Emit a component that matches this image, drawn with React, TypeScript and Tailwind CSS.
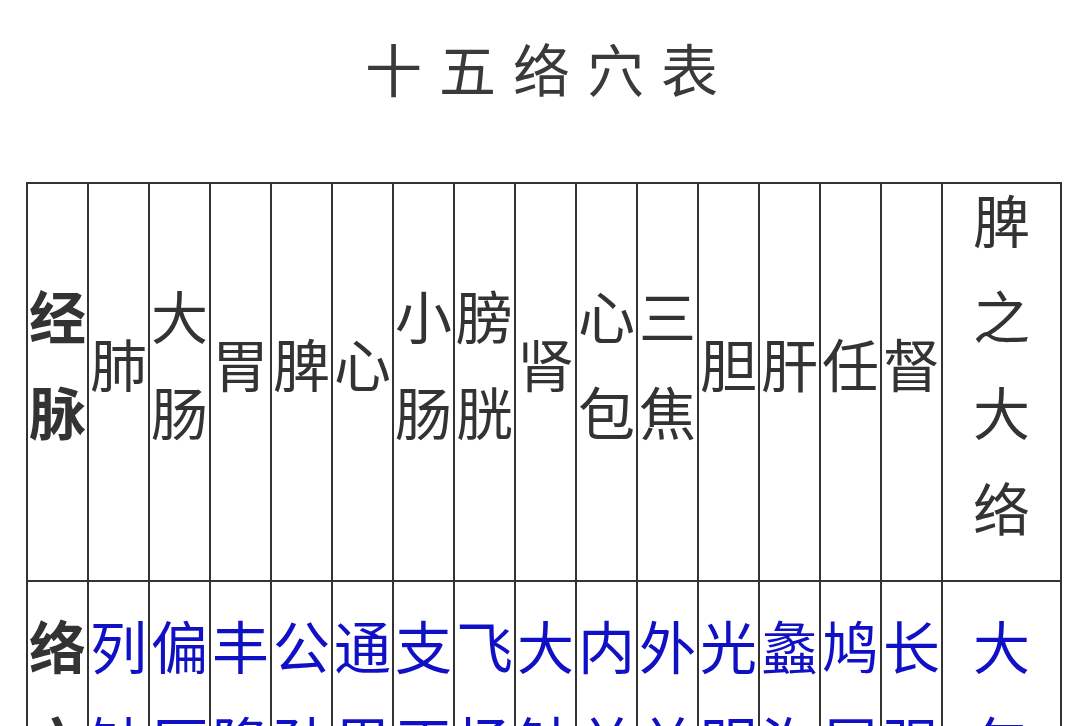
const channels = [
  "肺", "大肠", "胃", "脾", "心", "小肠", "膀胱", "肾", "心包", "三焦", "胆", "肝", "任", "督", "脾之大络",
];

const points = [
  "列缺", "偏历", "丰隆", "公孙", "通里", "支正", "飞扬", "大钟", "内关", "外关", "光明", "蠡沟", "鸠尾", "长强", "大包",
];

function Stack({ text }: { text: string }) {
  // one character per line, like the narrow columns of the original page
  return (
    <div className="-mt-[14px]">
      {text.split("").map((ch, i) => (
        <div key={i}>{ch}</div>
      ))}
    </div>
  );
}

export default function App() {
  return (
    <div
      className="w-[1080px] h-[726px] overflow-hidden bg-white text-[#333]"
      style={{ fontFamily: '"Noto Sans CJK SC", "Noto Sans", sans-serif' }}
    >
      <h1 className="pt-[31px] h-[182px] text-center text-[57px] leading-[72px] font-normal tracking-[17px] pl-[20px] text-[#3a3a3a]">
        十五络穴表
      </h1>

      <table className="ml-[26px] w-[1034px] table-fixed border-collapse text-[57px] leading-[96px]">
        <colgroup>
          <col className="w-[61px]" />
          {channels.slice(0, 14).map((c) => (
            <col key={c} className="w-[61px]" />
          ))}
          <col className="w-[119px]" />
        </colgroup>
        <tbody>
          <tr>
            <th className="border-2 border-[#333] p-0 pb-[26px] align-middle text-center font-bold">
              <Stack text="经脉" />
            </th>
            {channels.map((c) => (
              <td key={c} className="border-2 border-[#333] p-0 pb-[26px] align-middle text-center">
                <Stack text={c} />
              </td>
            ))}
          </tr>
          <tr>
            <th className="border-2 border-[#333] p-0 pt-[28px] pb-[26px] align-top text-center font-bold">
              <Stack text="络穴" />
            </th>
            {points.map((p) => (
              <td key={p} className="border-2 border-[#333] p-0 pt-[28px] pb-[26px] align-top text-center text-[#1010c4]">
                <Stack text={p} />
              </td>
            ))}
          </tr>
        </tbody>
      </table>
    </div>
  );
}
